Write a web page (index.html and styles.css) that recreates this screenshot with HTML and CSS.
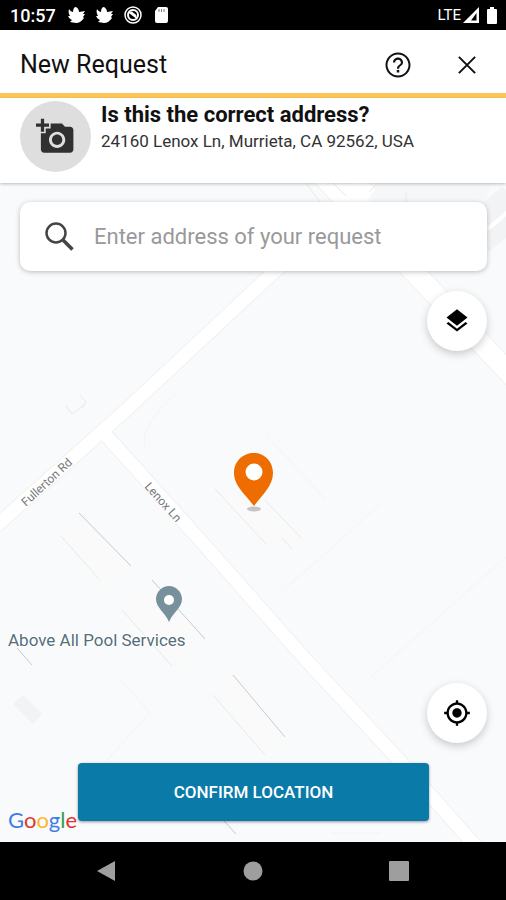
FILE: index.html
```html
<!DOCTYPE html>
<html lang="en">
<head>
  <meta charset="UTF-8">
  <meta name="viewport" content="width=device-width, initial-scale=1.0">
  <title>New Request</title>
  <link rel="stylesheet" href="styles.css">
</head>
<body>
  <div class="status-bar">
    <span class="clock">10:57</span>
    <svg class="status-icon" viewBox="0 0 18 18"><path d="M1 3c1 2 3 3 4 3 0-3 1-5 3-5 2 1 3 3 3 5l6-1-2 3 2 0-2 3 1 1c-2 3-5 5-8 5-2 0-4-1-6-1l2-2C2 13 1 12 0 10l2 0C1 8 0 6 1 3z"/></svg>
    <svg class="status-icon" viewBox="0 0 18 18"><path d="M1 3c1 2 3 3 4 3 0-3 1-5 3-5 2 1 3 3 3 5l6-1-2 3 2 0-2 3 1 1c-2 3-5 5-8 5-2 0-4-1-6-1l2-2C2 13 1 12 0 10l2 0C1 8 0 6 1 3z"/></svg>
    <svg class="status-icon" viewBox="0 0 18 18"><g fill="none" stroke="#fff"><circle cx="9" cy="9" r="8" stroke-width="1.500"/><circle cx="9" cy="9" r="5" stroke-width="2"/><path d="M5 6l8 6M7 6l5 4" stroke-width="1.800"/></g></svg>
    <svg class="status-icon" viewBox="0 0 18 18"><path d="M6 1h8q2 0 2 2v12q0 2-2 2H5q-2 0-2-2V5z"/><path d="M7 3v3M9.500 3v3M12 3v3" stroke="#777" stroke-width="1"/></svg>
    <span class="network">LTE</span>
    <svg class="signal" viewBox="0 0 16 16"><path fill-rule="evenodd" d="M16 0v16H0zM13.500 6L8 13.500h5.500z"/></svg>
    <svg class="battery" viewBox="0 0 12 17"><path d="M4 0h4v2h2q1 0 1 1v13q0 1-1 1H2q-1 0-1-1V3q0-1 1-1h2z"/></svg>
  </div>

  <header class="app-bar">
    <h1>New Request</h1>
    <button class="icon-btn" aria-label="Help">
      <svg viewBox="0 0 24 24"><path d="M11 18h2v-2h-2v2zm1-16C6.480 2 2 6.480 2 12s4.480 10 10 10 10-4.480 10-10S17.520 2 12 2zm0 18.400c-4.600 0-8.400-3.800-8.400-8.400s3.800-8.400 8.400-8.400 8.400 3.800 8.400 8.400-3.800 8.400-8.400 8.400zm0-14.400c-2.210 0-4 1.790-4 4h1.700c0-1.300 1-2.300 2.300-2.300s2.300 1 2.300 2.300c0 2-3.200 1.750-3.200 5h1.800c0-2.250 3.100-2.500 3.100-5 0-2.210-1.790-4-4-4z"/></svg>
    </button>
    <button class="icon-btn" aria-label="Close">
      <svg viewBox="0 0 24 24"><path d="M5.500 5.500l13 13M18.500 5.500l-13 13" fill="none" stroke="#111" stroke-width="1.600"/></svg>
    </button>
  </header>

  <section class="address">
    <button class="photo-btn" aria-label="Add photo">
      <svg viewBox="0 0 24 24"><path d="M3 4V1h2v3h3v2H5v3H3V6H0V4h3zm3 6V7h3V4h7l1.830 2H21c1.100 0 2 .9 2 2v12c0 1.100-.9 2-2 2H5c-1.100 0-2-.9-2-2V10h3zm7 9c2.760 0 5-2.240 5-5s-2.240-5-5-5-5 2.240-5 5 2.240 5 5 5zm-3.200-5c0 1.770 1.430 3.200 3.200 3.200s3.200-1.430 3.200-3.200-1.430-3.200-3.200-3.200-3.200 1.430-3.200 3.200z"/></svg>
    </button>
    <div class="address-text">
      <h2>Is this the correct address?</h2>
      <p>24160 Lenox Ln, Murrieta, CA 92562, USA</p>
    </div>
  </section>

  <main class="map">
    <svg class="map-canvas" viewBox="0 183 506 659" preserveAspectRatio="xMidYMid slice">
      <!-- blocks -->
      <g fill="#f1f3f4">
        <path d="M484 202l18-15 4 3v48l-18 14z"/>
        <path d="M378 183l-9 9 5 11h110l8-20z" fill="#f5f7f8"/>
        <path d="M13 704l10-9 19 19-9 10z"/>
      </g>
      <g fill="#fafafa">
        <path d="M215 488l38 10 49 40-10 12-25-2z"/>
        <path d="M79 513l52 53-25 24-45-54z"/>
        <path d="M233 675l52 62-14 20-59-68z"/>
        <path d="M152 580l53 59-20 30-63-59z"/>
      </g>
      <!-- roads -->
      <g fill="none" stroke="#f0f1f2">
        <path stroke-width="22" d="M312 165l103 108 100 106"/>
        <path stroke-width="15" d="M-5 527l131-117 150-140 80-75"/>
        <path stroke-width="15" d="M105 434l95 106 106 120 94 101 80 90"/>
      </g>
      <g fill="none" stroke="#fff">
        <path stroke-width="20" d="M312 165l103 108 100 106"/>
        <path stroke-width="28" d="M340 215l24-34"/>
        <path stroke-width="13" d="M-5 527l131-117 150-140 80-75"/>
        <path stroke-width="13" d="M103 432l97 108 106 120 94 101 80 90"/>
        <path stroke-width="4" d="M488 229l20-17"/>
      </g>
      <!-- building edges -->
      <g fill="none" stroke="#c8cacb">
        <path d="M79 513l52 53M152 580l53 59M17 648l15 17M233 675l52 62M224 821l12 13"/>
      </g>
      <g fill="none" stroke="#e8e9e9">
        <path d="M61 536l38 43M215 489l52 56M265 500l37 39M282 538l10 11M213 695l52 60M66 406l6 8 13-9M80 395l6 7-5 6M306 183l14 19M333 183l13 13M378 183l-9 9M406 192v10M122 610l50 56"/>
      </g>
      <g fill="none" stroke="#f2f4f5">
        <path d="M382 502l-50 46-50 43M506 557l-135 120M266 435l60 65M178 392q-40 35-33 55M100 768l50-55-28-32M331 833h50"/>
      </g>
      <text class="road-name" transform="translate(26 507) rotate(-43)">Fullerton Rd</text>
      <text class="road-name" transform="translate(144 487) rotate(48)">Lenox Ln</text>
      <!-- business marker -->
      <path fill="#78909c" d="M169 586c-7 0-13 6-13 13 0 9 9 13 13 23 4-10 13-14 13-23 0-7-6-13-13-13z"/>
      <circle cx="169" cy="600" r="5" fill="#fff"/>
      <text class="place-name" x="8" y="646">Above All Pool Services</text>
      <!-- selected location -->
      <ellipse cx="254" cy="509" rx="7" ry="2.500" fill="#c4c4c4"/>
      <path fill="#ef6c00" d="M254 453c-11 0-20 8-20 20 0 13 12 22 20 33 8-11 19-20 19-33 0-12-9-20-19-20z"/>
      <circle cx="254" cy="472" r="8.500" fill="#fff"/>
    </svg>

    <div class="search">
      <label for="address-input" aria-label="Address">
        <svg viewBox="0 0 30 30"><g fill="none" stroke="#444"><circle cx="12" cy="11" r="9.500" stroke-width="2.500"/><path d="M18.500 17.500L28.500 27.500" stroke-width="3.500"/></g></svg>
      </label>
      <input type="text" id="address-input" placeholder="Enter address of your request">
    </div>

    <button class="round-btn" aria-label="Map layers">
      <svg viewBox="0 0 24 24"><path d="M11.990 18.540l-7.370-5.730L3 14.070l9 7 9-7-1.630-1.270-7.380 5.740zM12 16l7.360-5.730L21 9l-9-7-9 7 1.630 1.270L12 16z"/></svg>
    </button>

    <button class="round-btn locate" aria-label="My location">
      <svg viewBox="0 0 24 24"><path d="M12 8c-2.210 0-4 1.790-4 4s1.790 4 4 4 4-1.790 4-4-1.790-4-4-4zm8.940 3c-.46-4.170-3.770-7.480-7.940-7.940V1h-2v2.060C6.830 3.520 3.520 6.830 3.060 11H1v2h2.060c.46 4.170 3.770 7.480 7.940 7.940V23h2v-2.060c4.170-.46 7.480-3.770 7.940-7.940H23v-2h-2.060zM12 19c-3.870 0-7-3.130-7-7s3.130-7 7-7 7 3.130 7 7-3.130 7-7 7z"/></svg>
    </button>

    <button class="confirm-btn">CONFIRM LOCATION</button>

    <div class="google"><span class="blue">G</span><span class="red">o</span><span class="yellow">o</span><span class="blue">g</span><span class="green">l</span><span class="red">e</span></div>
  </main>

  <nav class="nav-bar">
    <button aria-label="Back"><svg viewBox="0 0 20 22"><path d="M18 1v20L0 11z"/></svg></button>
    <button aria-label="Home"><svg viewBox="0 0 20 22"><circle cx="10" cy="11" r="9.500"/></svg></button>
    <button aria-label="Recent apps"><svg viewBox="0 0 20 22"><rect y="1" width="20" height="20" rx="1"/></svg></button>
  </nav>
</body>
</html>
```

FILE: styles.css
```css
* {
  box-sizing: border-box;
}

body {
  margin: 0;
  font-family: Roboto, "Liberation Sans", sans-serif;
  display: flex;
  flex-direction: column;
  min-height: 100vh;
  background: #fff;
  color: #111;
}

h1, h2, p {
  margin: 0;
}

button {
  padding: 0;
  border: none;
  background: none;
  font-family: inherit;
  cursor: pointer;
}

svg {
  display: block;
}

/* status bar */
.status-bar {
  display: flex;
  align-items: center;
  gap: 10px;
  height: 30px;
  padding: 0 8px 0 10px;
  background: #000;
  color: #fff;
}

.status-bar svg {
  fill: #fff;
}

.clock {
  font-size: 18px;
  font-weight: 500;
  margin-right: 2px;
}

.status-icon {
  width: 18px;
  height: 18px;
}

.network {
  margin-left: auto;
  font-size: 15px;
}

.signal {
  width: 16px;
  height: 16px;
  margin-left: -8px;
}

.battery {
  width: 12px;
  height: 17px;
  margin-left: -3px;
}

/* header */
.app-bar {
  display: flex;
  align-items: center;
  gap: 39px;
  height: 68px;
  padding: 6px 24px 0 20px;
  border-bottom: 5px solid #fcc754;
}

.app-bar h1 {
  flex: 1;
  font-size: 25px;
  font-weight: 400;
}

.icon-btn svg {
  width: 30px;
  height: 30px;
  fill: #111;
}

.address {
  position: relative;
  z-index: 1;
  display: flex;
  gap: 10px;
  height: 85px;
  padding: 3px 20px 0;
  background: #fff;
  box-shadow: 0 1px 3px rgba(0, 0, 0, 0.25);
}

.photo-btn {
  display: flex;
  align-items: center;
  justify-content: center;
  flex-shrink: 0;
  width: 71px;
  height: 71px;
  border-radius: 50%;
  background: #dedede;
}

.photo-btn svg {
  width: 39px;
  height: 39px;
  fill: #303030;
}

.address h2 {
  font-size: 22px;
  font-weight: 700;
  line-height: 28px;
}

.address p {
  font-size: 17px;
  line-height: 24px;
  color: #333;
}

/* map */
.map {
  position: relative;
  display: flex;
  flex-direction: column;
  flex-grow: 1;
  gap: 20px;
  padding: 19px 19px 21px 20px;
  background: #f8fafb;
  overflow: hidden;
}

.map-canvas {
  position: absolute;
  top: 0;
  left: 0;
  width: 100%;
  height: 100%;
}

.road-name {
  font-size: 12px;
  fill: #77797b;
  stroke: #fff;
  stroke-width: 2px;
  paint-order: stroke;
}

.place-name {
  font-size: 17px;
  fill: #546e7a;
  stroke: #fff;
  stroke-width: 2px;
  paint-order: stroke;
}

.search {
  position: relative;
  display: flex;
  align-items: center;
  gap: 20px;
  height: 69px;
  padding: 0 24px;
  border-radius: 10px;
  background: #fff;
  box-shadow: 0 1px 5px rgba(0, 0, 0, 0.25);
}

.search svg {
  width: 30px;
  height: 30px;
}

.search input {
  flex: 1;
  min-width: 0;
  padding: 0;
  border: none;
  outline: none;
  background: none;
  font-family: inherit;
  font-size: 22px;
  color: #111;
}

.search input::placeholder {
  color: #999;
}

.round-btn {
  position: relative;
  display: flex;
  align-items: center;
  justify-content: center;
  align-self: flex-end;
  width: 60px;
  height: 60px;
  border-radius: 50%;
  background: #fff;
  box-shadow: 0 3px 8px rgba(0, 0, 0, 0.2);
}

.round-btn svg {
  width: 28px;
  height: 28px;
}

.locate {
  margin-top: auto;
}

.confirm-btn {
  position: relative;
  align-self: center;
  width: 75%;
  height: 58px;
  border-radius: 4px;
  background: #0a7ba8;
  color: #fff;
  font-size: 17px;
  font-weight: 500;
  box-shadow: 0 1px 3px rgba(0, 0, 0, 0.4);
}

.google {
  position: absolute;
  left: 8px;
  bottom: 8px;
  font-family: Lato, sans-serif;
  font-size: 22px;
  line-height: 28px;
}

.blue { color: #3f7de8; }
.red { color: #e0352b; }
.yellow { color: #fbb829; }
.green { color: #2fa04e; }

/* system navigation */
.nav-bar {
  display: flex;
  align-items: center;
  justify-content: center;
  gap: 126px;
  height: 58px;
  background: #000;
}

.nav-bar svg {
  width: 20px;
  height: 22px;
  fill: #9e9e9e;
}
```
